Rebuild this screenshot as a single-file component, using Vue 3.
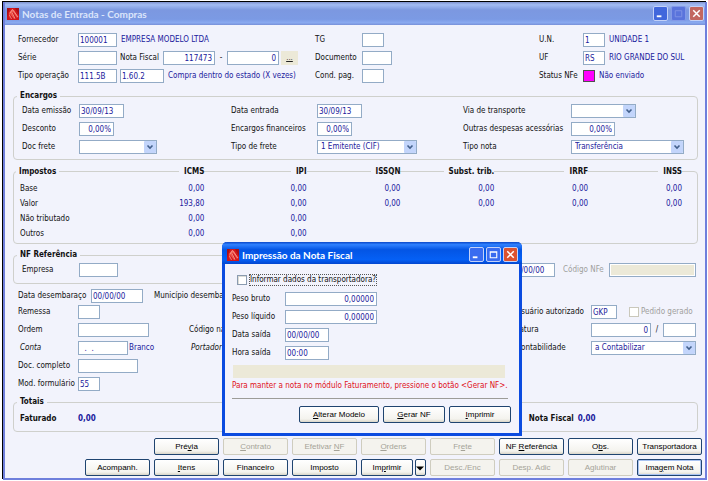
<script setup>
import { ref } from 'vue'

const taxHeaders = ['ICMS', 'IPI', 'ISSQN', 'Subst. trib.', 'IRRF', 'INSS']
const taxRows = [
  { label: 'Base', values: ['0,00', '0,00', '0,00', '0,00', '0,00', '0,00'] },
  { label: 'Valor', values: ['193,80', '0,00', '0,00', '0,00', '0,00', '0,00'] },
  { label: 'Não tributado', values: ['0,00', '0,00', '', '', '', ''] },
  { label: 'Outros', values: ['0,00', '0,00', '', '', '', ''] },
]

// Each caption is split around its underlined access key.
const actions = [
  { text: ['Pré', 'v', 'ia'], first: true },
  { text: ['', 'C', 'ontrato'], off: true },
  { text: ['Efetivar ', 'N', 'F'], off: true },
  { text: ['', 'O', 'rdens'], off: true },
  { text: ['Fr', 'e', 'te'], off: true },
  { text: ['NF ', 'R', 'eferência'] },
  { text: ['O', 'b', 's.'] },
  { text: ['Transportadora', '', ''] },
  { text: ['Acompanh.', '', ''] },
  { text: ['', 'I', 'tens'] },
  { text: ['Financeiro', '', ''] },
  { text: ['Imposto', '', ''] },
  { text: ['Im', 'p', 'rimir'], split: true },
  { text: ['Desc./Enc', '', ''], off: true },
  { text: ['Desp. Adic', '', ''], off: true },
  { text: ['Aglutinar', '', ''], off: true },
  { text: ['Ima', 'g', 'em Nota'], active: true },
]

const withCarrier = ref(false)
const orderCreated = ref(false)
</script>

<template>
  <div class="screen">
    <main class="window">
      <header class="titlebar">
        <svg class="logo" viewBox="0 0 12 12" aria-hidden="true">
          <rect width="12" height="12" fill="#d0151b" />
          <path d="M0 0h3L1 5 0 9zM8 0h4v7z" fill="#a80f16" />
          <path d="M2 5 5 1l2 1 4 7-1 1-4-6-1 1 3 6-1 0-4-5-1 5" fill="#ef5548" />
          <path d="M3 5 5.500 1.500 11 9M5 4.500 8 10.500M2.500 7 4.500 11" fill="none" stroke="#f7aca2" stroke-width=".7" />
        </svg>
        <h1>Notas de Entrada - Compras</h1>
        <div class="controls">
          <button type="button" class="ctl min" aria-label="Minimizar"><svg viewBox="0 0 14 14"><path d="M3 10h5" stroke="#fff" stroke-width="2" /></svg></button>
          <button type="button" class="ctl dim" aria-label="Maximizar" disabled><svg viewBox="0 0 14 14"><path d="M3.500 4h7v6.500h-7z" fill="none" stroke="#7f93e6" /></svg></button>
          <button type="button" class="ctl close" aria-label="Fechar"><svg viewBox="0 0 14 14"><path d="m3.500 3.500 7 7m0-7-7 7" stroke="#fff" stroke-width="1.600" /></svg></button>
        </div>
      </header>

      <div class="body">
        <section class="top">
          <div class="stack">
            <div class="row">
              <label class="lab" for="forn">Fornecedor</label>
              <input id="forn" class="w39" value="100001" />
              <span class="val">EMPRESA MODELO LTDA</span>
            </div>
            <div class="row">
              <label class="lab" for="serie">Série</label>
              <input id="serie" class="w39" />
              <label class="mid" for="nf">Nota Fiscal</label>
              <input id="nf" class="w52 num" value="117473" />
              <span class="dash">-</span>
              <input class="w52 num" value="0" aria-label="Complemento da nota" />
              <button type="button" class="more" aria-label="Procurar"><u>...</u></button>
            </div>
            <div class="row">
              <label class="lab" for="tipo">Tipo operação</label>
              <input id="tipo" class="w39" value="111.5B" />
              <input class="w44 gap" value="1.60.2" aria-label="Código fiscal" />
              <span class="val">Compra dentro do estado (X vezes)</span>
            </div>
          </div>
          <div class="stack">
            <div class="row"><label class="lab b" for="tg">TG</label><input id="tg" class="w22" /></div>
            <div class="row"><label class="lab b" for="doc">Documento</label><input id="doc" class="w30" /></div>
            <div class="row"><label class="lab b" for="cond">Cond. pag.</label><input id="cond" class="w22" /></div>
          </div>
          <div class="stack">
            <div class="row"><label class="lab c" for="un">U.N.</label><input id="un" class="w22" value="1" /><span class="val">UNIDADE 1</span></div>
            <div class="row"><label class="lab c" for="uf">UF</label><input id="uf" class="w22" value="RS" /><span class="val">RIO GRANDE DO SUL</span></div>
            <div class="row"><span class="lab c">Status NFe</span><span class="swatch"></span><span class="val">Não enviado</span></div>
          </div>
        </section>

        <fieldset class="panel charges">
          <legend>Encargos</legend>
          <div class="stack">
            <div class="row"><label class="lab e" for="emi">Data emissão</label><input id="emi" class="w45" value="30/09/13" /></div>
            <div class="row"><label class="lab e" for="desc">Desconto</label><input id="desc" class="w35 num" value="0,00%" /></div>
            <div class="row">
              <label class="lab e" for="dfrete">Doc frete</label>
              <span class="combo w78"><select id="dfrete"><option></option></select><svg viewBox="0 0 12 12"><rect width="12" height="12" rx="1" /><path d="m3.500 4.500 2.500 2.500 2.500-2.500" /></svg></span>
            </div>
          </div>
          <div class="stack">
            <div class="row"><label class="lab f" for="ent">Data entrada</label><input id="ent" class="w45" value="30/09/13" /></div>
            <div class="row"><label class="lab f" for="enc">Encargos financeiros</label><input id="enc" class="w35 num" value="0,00%" /></div>
            <div class="row">
              <label class="lab f" for="tfrete">Tipo de frete</label>
              <span class="combo w100"><select id="tfrete"><option>1 Emitente (CIF)</option></select><svg viewBox="0 0 12 12"><rect width="12" height="12" rx="1" /><path d="m3.500 4.500 2.500 2.500 2.500-2.500" /></svg></span>
            </div>
          </div>
          <div class="stack">
            <div class="row">
              <label class="lab g" for="via">Via de transporte</label>
              <span class="combo w65"><select id="via"><option></option></select><svg viewBox="0 0 12 12"><rect width="12" height="12" rx="1" /><path d="m3.500 4.500 2.500 2.500 2.500-2.500" /></svg></span>
            </div>
            <div class="row"><label class="lab g" for="outras">Outras despesas acessórias</label><input id="outras" class="w44 num" value="0,00%" /></div>
            <div class="row">
              <label class="lab g" for="tnota">Tipo nota</label>
              <span class="combo w113"><select id="tnota"><option>Transferência</option></select><svg viewBox="0 0 12 12"><rect width="12" height="12" rx="1" /><path d="m3.500 4.500 2.500 2.500 2.500-2.500" /></svg></span>
            </div>
          </div>
        </fieldset>

        <section class="taxes">
          <table>
            <thead>
              <tr>
                <th scope="col"><span>Impostos</span></th>
                <th v-for="h in taxHeaders" :key="h" scope="col"><span>{{ h }}</span></th>
              </tr>
            </thead>
            <tbody>
              <tr v-for="r in taxRows" :key="r.label">
                <th scope="row">{{ r.label }}</th>
                <td v-for="(v, i) in r.values" :key="i">{{ v }}</td>
              </tr>
            </tbody>
          </table>
        </section>

        <section class="reference">
          <fieldset class="panel">
            <legend>NF Referência</legend>
            <div class="row"><label class="lab e" for="emp">Empresa</label><input id="emp" class="w39" /></div>
          </fieldset>
          <div class="row">
            <input class="w45" value="00/00/00" aria-label="Data de referência" />
            <label class="nfe" for="nfe">Código NFe</label>
            <input id="nfe" class="w87 locked" disabled />
          </div>
        </section>

        <section class="details">
          <div class="row first">
            <label for="desemb">Data desembaraço</label>
            <input id="desemb" class="w52" value="00/00/00" />
            <span>Município desembaraço</span>
          </div>
          <div class="line">
            <div class="row"><label class="lab" for="rem">Remessa</label><input id="rem" class="w22" /></div>
            <div class="row"></div>
            <div class="row">
              <label class="lab h" for="usr">Usuário autorizado</label><input id="usr" class="w26" value="GKP" />
              <label class="tick off"><input v-model="orderCreated" type="checkbox" disabled />Pedido gerado</label>
            </div>
          </div>
          <div class="line">
            <div class="row"><label class="lab" for="ordem">Ordem</label><input id="ordem" class="w71" /></div>
            <div class="row"><span>Código natureza</span></div>
            <div class="row">
              <label class="lab h" for="fat">Fatura</label><input id="fat" class="w60 num" value="0" />
              <span class="slash">/</span><input class="w33" aria-label="Parcela da fatura" />
            </div>
          </div>
          <div class="line">
            <div class="row"><label class="lab it" for="conta">Conta</label><input id="conta" class="w50" value="  .  ." /><span class="val near">Branco</span></div>
            <div class="row"><span class="it">Portador</span></div>
            <div class="row">
              <label class="lab h" for="cont">Contabilidade</label>
              <span class="combo w105"><select id="cont"><option>a Contabilizar</option></select><svg viewBox="0 0 12 12"><rect width="12" height="12" rx="1" /><path d="m3.500 4.500 2.500 2.500 2.500-2.500" /></svg></span>
            </div>
          </div>
          <div class="row"><label class="lab" for="dcomp">Doc. completo</label><input id="dcomp" class="w60" /></div>
          <div class="row"><label class="lab" for="mod">Mod. formulário</label><input id="mod" class="w22" value="55" /></div>
        </section>

        <fieldset class="panel totals">
          <legend>Totais</legend>
          <div class="row"><span class="lab">Faturado</span><output>0,00</output></div>
          <div class="row"><span class="lab nota">Nota Fiscal</span><output>0,00</output></div>
        </fieldset>

        <nav class="actions">
          <div v-for="a in actions" :key="a.text.join('')" :class="['cell', { first: a.first }]">
            <button type="button" :class="['btn', { active: a.active }]" :disabled="a.off">{{ a.text[0] }}<u>{{ a.text[1] }}</u>{{ a.text[2] }}</button>
            <button v-if="a.split" type="button" class="btn drop" aria-label="Opções de impressão"><svg viewBox="0 0 8 8"><path d="M0 2.500h8L4 6.500z" fill="#000" /></svg></button>
          </div>
        </nav>
      </div>
    </main>

    <section class="dialog" role="dialog" aria-labelledby="dlg-title">
      <header class="titlebar">
        <svg class="logo" viewBox="0 0 12 12" aria-hidden="true">
          <rect width="12" height="12" fill="#d0151b" />
          <path d="M0 0h3L1 5 0 9zM8 0h4v7z" fill="#a80f16" />
          <path d="M2 5 5 1l2 1 4 7-1 1-4-6-1 1 3 6-1 0-4-5-1 5" fill="#ef5548" />
          <path d="M3 5 5.500 1.500 11 9M5 4.500 8 10.500M2.500 7 4.500 11" fill="none" stroke="#f7aca2" stroke-width=".7" />
        </svg>
        <h2 id="dlg-title">Impressão da Nota Fiscal</h2>
        <div class="controls">
          <button type="button" class="ctl" aria-label="Minimizar"><svg viewBox="0 0 14 14"><path d="M3 10h5" stroke="#fff" stroke-width="2" /></svg></button>
          <button type="button" class="ctl" aria-label="Maximizar"><svg viewBox="0 0 14 14"><path d="M3.500 4h7v6.500h-7zM3 4.500h8" fill="none" stroke="#fff" stroke-width="1.200" /></svg></button>
          <button type="button" class="ctl close" aria-label="Fechar"><svg viewBox="0 0 14 14"><path d="m3.500 3.500 7 7m0-7-7 7" stroke="#fff" stroke-width="1.600" /></svg></button>
        </div>
      </header>
      <div class="content">
        <label class="tick"><input v-model="withCarrier" type="checkbox" /><span class="focus">Informar dados da transportadora?</span></label>
        <div class="stack">
          <div class="row"><label class="lab d" for="pb">Peso bruto</label><input id="pb" class="w92 num" value="0,00000" /></div>
          <div class="row"><label class="lab d" for="pl">Peso líquido</label><input id="pl" class="w92 num" value="0,00000" /></div>
          <div class="row"><label class="lab d" for="ds">Data saída</label><input id="ds" class="w44" value="00/00/00" /></div>
          <div class="row"><label class="lab d" for="hs">Hora saída</label><input id="hs" class="w44" value="00:00" /></div>
        </div>
        <div class="bar"></div>
        <p class="warn">Para manter a nota no módulo Faturamento, pressione o botão &lt;Gerar NF&gt;.</p>
        <hr />
        <div class="choices">
          <button type="button" class="btn wide"><u>A</u>lterar Modelo</button>
          <button type="button" class="btn"><u>G</u>erar NF</button>
          <button type="button" class="btn"><u>I</u>mprimir</button>
        </div>
      </div>
    </section>
  </div>
</template>

<style>
body {
  background: #fff;
}
</style>

<style scoped>
* {
  box-sizing: border-box;
}

.screen {
  position: relative;
  min-height: 100vh;
  padding: 2px 1px 1px 3px;
  display: flex;
  font: 8px/14px "DejaVu Sans Condensed", "DejaVu Sans", sans-serif;
  color: #111;
}

.window {
  flex: 1;
  min-width: 0;
  display: flex;
  flex-direction: column;
  background: #f2f3fc;
  border: 2px solid #6f7fdc;
  border-top: 0;
  box-shadow: -1px -1px 0 #000;
}

/* title bars */
.titlebar {
  height: 23px;
  display: flex;
  align-items: center;
  padding: 0 1px 0 2px;
  background: linear-gradient(#7f92cf, #a3bcf3 12%, #7c98e0 35%, #7b9ae4 75%, #8aaaf0 90%, #7790d8);
}

.titlebar h1,
.titlebar h2 {
  flex: 1;
  margin: 0 0 0 3px;
  font: bold 10px/16px Lato, "Open Sans", sans-serif;
  color: #dbe5fb;
  white-space: nowrap;
}

.logo {
  width: 12px;
  height: 12px;
}

.controls {
  display: flex;
  gap: 3px;
}

.ctl {
  width: 15px;
  height: 15px;
  padding: 0;
  border: 1px solid #c3d1f8;
  border-radius: 2px;
  background: #4167dc;
}

.ctl svg {
  display: block;
  width: 13px;
  height: 13px;
}

.ctl.dim {
  background: #5a74dc;
  border-color: #8399e8;
}

.ctl.close {
  background: #c2665f;
}

/* rows, labels and fields */
.body {
  flex: 1;
  display: flex;
  flex-direction: column;
  padding: 8px 7px 2px 8px;
}

.row {
  display: flex;
  align-items: center;
  height: 14px;
  white-space: nowrap;
  min-width: 0;
}

.stack {
  display: grid;
  gap: 4px;
  min-width: 0;
}

.lab {
  width: 60px;
  flex: none;
}

.lab.b { width: 47px; }
.lab.c { width: 44px; }
.lab.d { width: 53px; }
.lab.e { width: 57px; }
.lab.f { width: 86px; }
.lab.g { width: 108px; }
.lab.h { width: 75px; }

.it {
  font-style: italic;
  padding-left: 2px;
}

.val {
  color: #1a1a9c;
  margin-left: 4px;
}

.val.near {
  margin-left: 1px;
}

input,
select {
  height: 14px;
  margin: 0;
  padding: 0 2px 0 1px;
  flex: none;
  font: inherit;
  line-height: 12px;
  color: #1a1a9c;
  background: #fff;
  border: 1px solid #93abc6;
  border-radius: 0;
  white-space: pre;
}

.num {
  text-align: right;
}

.w22 { width: 22px; }
.w26 { width: 26px; }
.w30 { width: 30px; }
.w33 { width: 33px; }
.w35 { width: 35px; }
.w39 { width: 39px; }
.w44 { width: 44px; }
.w45 { width: 45px; }
.w50 { width: 50px; }
.w52 { width: 52px; }
.w60 { width: 60px; }
.w65 { width: 65px; }
.w71 { width: 71px; }
.w78 { width: 78px; }
.w87 { width: 87px; }
.w92 { width: 92px; }
.w100 { width: 100px; }
.w105 { width: 105px; }
.w113 { width: 113px; }

.gap,
.mid {
  margin-left: 3px;
}

.mid {
  width: 43px;
}

.dash {
  width: 12px;
  text-align: center;
}

.more {
  width: 17px;
  height: 14px;
  margin-left: 2px;
  padding: 0;
  border: 0;
  font: 8px/12px "Liberation Sans", sans-serif;
  color: #222;
  background: #ece9d8;
}

.swatch {
  width: 12px;
  height: 12px;
  background: #f0f;
  border: 1px solid #505050;
}

.combo {
  display: grid;
  flex: none;
}

.combo > * {
  grid-area: 1 / 1;
}

.combo select {
  width: 100%;
  appearance: none;
  padding-left: 3px;
}

.combo svg {
  width: 12px;
  height: 12px;
  margin: 1px;
  justify-self: end;
  pointer-events: none;
}

.combo rect {
  fill: #c3d5fb;
}

.combo path {
  fill: none;
  stroke: #43608c;
  stroke-width: 1.6;
}

.top {
  display: grid;
  grid-template-columns: 297fr 224fr 159fr;
  padding-left: 5px;
}

/* grouped panels */
.panel {
  min-width: 0;
  margin: 7px 0 0;
  padding: 2px 0 5px 8px;
  border: 1px solid #cfd0cc;
  border-radius: 4px;
}

legend {
  margin-left: -5px;
  padding: 0 3px;
  font-weight: bold;
  line-height: 12px;
}

.charges {
  display: grid;
  grid-template-columns: 209fr 232fr 234fr;
}

.taxes {
  margin-top: 11px;
  padding-bottom: 2px;
  border: 1px solid #cfd0cc;
  border-radius: 4px;
}

.taxes table {
  width: calc(100% - 15px);
  margin-top: -6px;
  table-layout: fixed;
  border-collapse: collapse;
}

.taxes th,
.taxes td {
  height: 15px;
  padding: 0;
  text-align: right;
  white-space: nowrap;
}

.taxes td {
  color: #1a1a9c;
}

.taxes thead th {
  line-height: 12px;
  vertical-align: top;
}

.taxes thead span {
  background: #f2f3fc;
  padding-left: 5px;
}

.taxes th:first-child {
  width: 15%;
  padding-left: 6px;
  text-align: left;
}

.taxes thead th:first-child {
  padding-left: 2px;
}

.taxes thead th:first-child span {
  padding: 0 3px;
}

.taxes thead th:nth-child(2) { width: 13.5%; }
.taxes thead th:nth-child(3) { width: 15.3%; }

.taxes tbody th {
  font-weight: normal;
}

.reference {
  display: flex;
  justify-content: space-between;
  margin-top: 5px;
}

.reference .panel {
  width: 56%;
  margin: 0;
  padding-bottom: 6px;
}

.reference > .row {
  margin: 14px 2px 0 0;
}

.nfe {
  width: 54px;
  padding-left: 8px;
  color: #a0a09c;
}

.locked {
  background: #ece9d8;
  border-color: #93abc6;
  box-shadow: inset 0 0 0 1px #fff;
}

.details {
  display: grid;
  gap: 4px;
  margin-top: 5px;
  padding-left: 5px;
}

.details .first {
  margin-bottom: -2px;
}

.first label {
  width: 73px;
}

.first span {
  margin-left: 11px;
}

.line {
  display: grid;
  grid-template-columns: 171fr 327fr 182fr;
}

.slash {
  width: 12px;
  text-align: center;
}

.tick {
  display: flex;
  align-items: center;
  gap: 2px;
}

.tick input {
  appearance: none;
  width: 10px;
  height: 10px;
  padding: 0;
  border-color: #8a9bb0;
  box-shadow: inset 1px 1px 0 #dcdcd7;
}

.tick.off {
  margin-left: 12px;
  color: #a0a09c;
}

.tick.off input {
  border-color: #cac8bb;
  box-shadow: none;
}

.totals {
  display: grid;
  grid-template-columns: 508fr 168fr;
  margin-top: 5px;
  padding: 4px 0 5px 6px;
  font-weight: bold;
}

.totals legend {
  margin-left: -3px;
}

.totals .lab {
  width: 58px;
}

.totals .lab.nota {
  width: 49px;
}

output {
  color: #1a1a9c;
}

/* command buttons */
.actions {
  display: grid;
  grid-template-columns: repeat(9, 1fr);
  gap: 4px;
  margin: 6px -4px 0 0;
  padding-left: 72px;
}

.cell {
  display: flex;
  gap: 2px;
  min-width: 0;
}

.cell.first {
  grid-column-start: 2;
}

.btn {
  flex: 1;
  min-width: 0;
  height: 17px;
  padding: 0;
  border: 1px solid #1f4470;
  border-radius: 2px;
  font: 8px/14px "Liberation Sans", sans-serif;
  color: #000;
  white-space: nowrap;
  background: linear-gradient(#fff, #f4f3ee 80%, #d9d5c8);
}

.btn:disabled {
  color: #a5a398;
  background: #f4f3ee;
  border-color: #cfcdbf;
}

.btn.active {
  box-shadow: inset 0 0 0 1px #a9c3f2;
}

.btn.drop {
  flex: none;
  width: 11px;
}

.drop svg {
  display: block;
  width: 8px;
  height: 8px;
}

/* print dialog, floating over the form */
.dialog {
  position: absolute;
  left: 222px;
  top: 242px;
  width: 300px;
  background: #f2f3fc;
  border: 3px solid #0b4be0;
  border-top: 0;
  border-radius: 5px 5px 0 0;
}

.dialog .titlebar {
  height: 22px;
  margin: 0 -3px;
  padding: 3px 4px 0 5px;
  border-radius: 5px 5px 0 0;
  background: linear-gradient(#0a47c8, #2f81ff 12%, #0455e4 35%, #0560f5 80%, #0346cf);
}

.dialog .titlebar h2 {
  color: #fff;
}

.dialog .controls {
  gap: 2px;
}

.dialog .ctl {
  background: #3a6cf0;
}

.dialog .ctl.close {
  background: #dc5230;
}

.content {
  padding: 9px 8px 10px 7px;
}

.content .stack {
  margin-top: 6px;
}

.content .tick {
  width: max-content;
  margin-left: 5px;
  height: 13px;
}

.focus {
  line-height: 10px;
  border: 1px dotted #555;
}

.bar {
  height: 13px;
  margin: 5px 6px 0 1px;
  background: #ece9d8;
}

.warn {
  margin: 2px 0 0;
  line-height: 12px;
  color: #e01020;
  white-space: nowrap;
}

hr {
  margin: 6px 3px 7px 0;
  border: 0;
  border-top: 1px solid #9c9c98;
}

.choices {
  display: flex;
  justify-content: flex-end;
  gap: 4px;
}

.choices .btn {
  flex: none;
  width: 62px;
}

.choices .wide {
  width: 80px;
}
</style>
